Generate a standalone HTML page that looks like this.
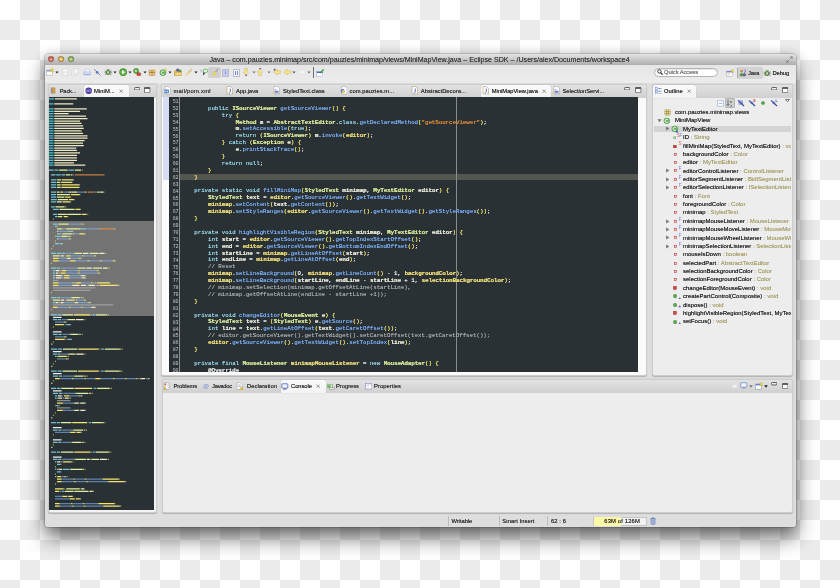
<!DOCTYPE html><html><head><meta charset='utf-8'><title>Eclipse SDK</title><style>
html,body{margin:0;padding:0}
body{width:840px;height:588px;overflow:hidden;position:relative;
 background-color:#fff;
 background-image:conic-gradient(#ececec 25%,#fff 0 50%,#ececec 0 75%,#fff 0);background-size:40px 40px;
 font-family:"Liberation Sans",sans-serif;font-size:5.9px;color:#222}
.a{position:absolute}
.t{position:absolute;white-space:nowrap;line-height:8px;height:8px;text-shadow:0 0 .4px rgba(20,20,20,.75)}
#win{left:45px;top:54px;width:751px;height:473px;background:#dedede;border-radius:3px 3px 2px 2px;
 box-shadow:0 0 0 .5px rgba(0,0,0,.3),0 11px 20px rgba(0,0,0,.55),0 1px 12px rgba(0,0,0,.18)}
#title{left:45px;top:54px;width:751px;height:10.6px;border-radius:3px 3px 0 0;
 background:linear-gradient(#e4e4e4,#adadad);box-shadow:0 .5px 0 #9a9a9a}
#tool{left:45px;top:64.6px;width:751px;height:18px;background:linear-gradient(#e6e6e6,#ececec)}
.tl{position:absolute;width:6.2px;height:6.2px;border-radius:50%;top:56px;box-sizing:border-box}
.panel{position:absolute;background:#ededed;border:1px solid #cdcdcd;border-radius:2.5px;box-sizing:border-box;
 box-shadow:0 .5px 1px rgba(0,0,0,.2)}
.tabbar{position:absolute;left:0;top:0;right:0;height:12.4px;background:linear-gradient(#e2e2e2,#d0d0d0);border-radius:2px 2px 0 0}
.atab{position:absolute;top:0;height:12.6px;background:linear-gradient(#fafafa,#f3f3f3);border-radius:2px 2px 0 0;box-shadow:0 0 .8px rgba(0,0,0,.4)}
.code{position:absolute;white-space:pre;text-shadow:0 0 .5px;font-family:"Liberation Mono",monospace;font-size:5.74px;line-height:6.895px;height:6.895px;color:#e6e6e6}
.ln{position:absolute;font-family:"Liberation Mono",monospace;font-size:5px;line-height:6.895px;height:6.895px;color:#c4c4c4;text-align:right;width:9px;left:169.4px;letter-spacing:-.2px}
.k{color:#94d2e4}.ty{color:#d6e59a;text-shadow:.4px 0 0,0 0 .5px}.m{color:#78aaf0}.v{color:#e8e8da;text-shadow:.4px 0 0,0 0 .5px}.f{color:#ecdc78;text-shadow:.4px 0 0,0 0 .5px}
.b{color:#f2e36e}.s{color:#e08a3c}.c{color:#a0a4a6}.o{color:#e8e8e8}.an{color:#dcdcdc;text-shadow:.4px 0 0,0 0 .5px}.n{color:#e8e8e8}
.dd{position:absolute;width:0;height:0;border-left:1.7px solid transparent;border-right:1.7px solid transparent;border-top:2.3px solid #222}
.ty2{color:#a59c62;text-shadow:0 0 .3px rgba(150,140,80,.6)}
</style></head><body><div id='root' style='position:absolute;left:0;top:0;width:840px;height:588px;will-change:transform;filter:blur(.3px)'>
<div id='win' class='a'></div><div id='title' class='a'></div><div id='tool' class='a'></div>
<div class='tl' style='left:48.3px;background:radial-gradient(circle at 50% 65%,#f09a90 20%,#c9453c 95%);border:.5px solid rgba(90,60,40,.45)'></div>
<div class='tl' style='left:58.2px;background:radial-gradient(circle at 50% 65%,#f8dc8a 20%,#d0a030 95%);border:.5px solid rgba(90,60,40,.45)'></div>
<div class='tl' style='left:68.1px;background:radial-gradient(circle at 50% 65%,#b8e092 20%,#6aa844 95%);border:.5px solid rgba(90,60,40,.45)'></div>
<div class='t' style='left:209.5px;top:56px;font-size:7.1px;color:#333;text-shadow:0 0 .4px rgba(40,40,40,.6)'>Java – com.pauzies.minimap/src/com/pauzies/minimap/views/MiniMapView.java – Eclipse SDK – /Users/alex/Documents/workspace4</div>
<svg class='a' style='left:786px;top:55.5px' width='7' height='7' viewBox='0 0 7 7'><path d='M4 0.5H6.5V3zM3 6.5H0.5V4z' fill='#777'/><path d='M6.2 .8L4 3M.8 6.2L3 4' stroke='#777' stroke-width='.8'/></svg>
<svg class='a' style='left:45.85px;top:68.45px' width='8.3' height='8.3' viewBox='0 0 16 16'><rect x='1' y='4' width='12' height='10' fill='#fdfde8' stroke='#a0a8c4' stroke-width='1'/><rect x='1' y='4' width='12' height='2.600' fill='#7f9ad6'/><path d='M12 0l1.2 2.6 2.8.4-2 2 .5 2.8L12 6.500 9.500 7.800l.5-2.800-2-2 2.800-.4z' fill='#f3d646' stroke='#b89a20' stroke-width='.5'/></svg>
<svg class='a' style='left:55.0px;top:71.4px' width='4' height='3' viewBox='0 0 4 3'><path d='M.4 .4h3.200L2 2.500z' fill='#222'/></svg>
<svg class='a' style='left:60.85px;top:68.45px' width='8.3' height='8.3' viewBox='0 0 16 16'><rect x='2' y='2' width='12' height='12' rx='1' fill='#efefef' stroke='#d2d2d2'/><rect x='4.500' y='2' width='7' height='4.500' fill='#f8f8f8' stroke='#d8d8d8' stroke-width='.6'/><rect x='4.500' y='9' width='7' height='5' fill='#f6f6f6' stroke='#d8d8d8' stroke-width='.6'/></svg>
<svg class='a' style='left:71.45px;top:68.45px' width='8.3' height='8.3' viewBox='0 0 16 16'><rect x='1' y='4' width='9' height='10' fill='#f1f1f1' stroke='#d4d4d4'/><rect x='5' y='1.500' width='9' height='10' fill='#f3f3f3' stroke='#d4d4d4'/></svg>
<svg class='a' style='left:82.85px;top:68.45px' width='8.3' height='8.3' viewBox='0 0 16 16'><rect x='4' y='2' width='8' height='6' fill='#fff' stroke='#a8b2d0' stroke-width='.8'/><path d='M5.500 4h5M5.500 5.800h5' stroke='#c8cee0' stroke-width='.6'/><rect x='1' y='7.500' width='14' height='6' rx='1.800' fill='#d4defa' stroke='#8a9cd0' stroke-width='.8'/><rect x='2.500' y='11.500' width='11' height='2' fill='#9fb2e6'/></svg>
<svg class='a' style='left:93.35px;top:68.45px' width='8.3' height='8.3' viewBox='0 0 16 16'><circle cx='8' cy='8.500' r='2.800' fill='#6a86d4'/><path d='M2 2L14.500 14.500' stroke='#3a4fa8' stroke-width='1.200'/></svg>
<svg class='a' style='left:104.15px;top:68.45px' width='8.3' height='8.3' viewBox='0 0 16 16'><ellipse cx='8' cy='8.500' rx='3.800' ry='4.400' fill='#6aa854' stroke='#2c4a24' stroke-width='1'/><path d='M1 5.500l3.500 1.500M1 9h3.200M1.500 13l3.300-2M15 5.500l-3.500 1.500M15 9h-3.200M14.500 13l-3.300-2M6 1.500l1 2.500M10 1.500l-1 2.500' stroke='#3a4a36' stroke-width='1' fill='none'/><ellipse cx='8' cy='8.500' rx='1.600' ry='2.200' fill='#d8f0c8'/></svg>
<svg class='a' style='left:112.8px;top:71.4px' width='4' height='3' viewBox='0 0 4 3'><path d='M.4 .4h3.200L2 2.500z' fill='#222'/></svg>
<svg class='a' style='left:118.75px;top:68.45px' width='8.3' height='8.3' viewBox='0 0 16 16'><circle cx='8' cy='8' r='7' fill='#4c9a35' stroke='#2f6e22' stroke-width='.8'/><circle cx='8' cy='8' r='5.600' fill='#6cb64e'/><path d='M6 4l5.500 4L6 12z' fill='#fff'/></svg>
<svg class='a' style='left:127.8px;top:71.4px' width='4' height='3' viewBox='0 0 4 3'><path d='M.4 .4h3.200L2 2.500z' fill='#222'/></svg>
<svg class='a' style='left:133.35px;top:68.45px' width='8.3' height='8.3' viewBox='0 0 16 16'><circle cx='6' cy='5.600' r='5' fill='#57a63c' stroke='#2f6e22' stroke-width='.7'/><path d='M4.600 3l3.600 2.600-3.600 2.600z' fill='#fff'/><rect x='7.500' y='10' width='7.500' height='4.600' rx='.8' fill='#d6392e' stroke='#8e1e18' stroke-width='.6'/><path d='M9.800 10V8.800h3V10' stroke='#8e1e18' stroke-width='.8' fill='none'/></svg>
<svg class='a' style='left:142.6px;top:71.4px' width='4' height='3' viewBox='0 0 4 3'><path d='M.4 .4h3.200L2 2.500z' fill='#222'/></svg>
<svg class='a' style='left:148.35px;top:68.45px' width='8.3' height='8.3' viewBox='0 0 16 16'><rect x='2' y='4' width='11.500' height='10' fill='#f0cc8a' stroke='#a87838' stroke-width='.9'/><path d='M7.800 4v10M2 8.500h11.500' stroke='#8a5c24' stroke-width='1.200'/><path d='M13 .5l.8 1.800 2 .2-1.500 1.300.4 2L13 4.800l-1.700 1 .4-2-1.500-1.300 2-.2z' fill='#f6dc50'/></svg>
<svg class='a' style='left:159.15px;top:68.45px' width='8.3' height='8.3' viewBox='0 0 16 16'><circle cx='7.500' cy='9' r='5.800' fill='#62b058' stroke='#3a8434' stroke-width='.9'/><path d='M10.200 6.800A3.400 3.400 0 1 0 10.400 11' stroke='#fff' stroke-width='1.700' fill='none'/><path d='M13 .5l.8 1.800 2 .2-1.500 1.300.4 2L13 4.800l-1.700 1 .4-2-1.500-1.300 2-.2z' fill='#f6dc50' stroke='#c4a62c' stroke-width='.3'/></svg>
<svg class='a' style='left:168.2px;top:71.4px' width='4' height='3' viewBox='0 0 4 3'><path d='M.4 .4h3.200L2 2.500z' fill='#222'/></svg>
<svg class='a' style='left:174.15px;top:68.45px' width='8.3' height='8.3' viewBox='0 0 16 16'><path d='M1 5h5l1.500 1.500H15V14H1z' fill='#f0c95a' stroke='#a8842a' stroke-width='.8'/><circle cx='7' cy='4' r='3' fill='#6a54a8'/><circle cx='11.500' cy='5.500' r='2.800' fill='#4f9a44'/><path d='M1 14l2-5.500h13L14 14z' fill='#f8dc84' stroke='#a8842a' stroke-width='.7'/></svg>
<svg class='a' style='left:185.45px;top:68.45px' width='8.3' height='8.3' viewBox='0 0 16 16'><path d='M2 14L12 3' stroke='#d8b66a' stroke-width='3.400' stroke-linecap='round'/><path d='M2.500 13.500L12 3' stroke='#f8ecb0' stroke-width='1.800' stroke-linecap='round'/><path d='M9 5.500l2.500 2.500' stroke='#aaa' stroke-width='1.600'/><circle cx='2.500' cy='13.500' r='1.300' fill='#fffbe0'/></svg>
<svg class='a' style='left:193.8px;top:71.4px' width='4' height='3' viewBox='0 0 4 3'><path d='M.4 .4h3.200L2 2.500z' fill='#222'/></svg>
<svg class='a' style='left:200.05px;top:68.45px' width='8.3' height='8.3' viewBox='0 0 16 16'><ellipse cx='10.500' cy='5.500' rx='4.500' ry='3.500' fill='#e3f2d8' stroke='#4b9a3c' stroke-width='1.300'/><path d='M6 8l3.500 1.500L6.500 15z' fill='#222'/><path d='M2 3.500v5M.5 4.500h3' stroke='#8aa0e0' stroke-width='1'/></svg>
<div class='a' style='left:209.4px;top:67.5px;width:10.4px;height:9.7px;background:#d0d0d0;box-shadow:0 0 0 .5px #bcbcbc;border-radius:.5px'></div>
<svg class='a' style='left:210.85px;top:68.45px' width='8.3' height='8.3' viewBox='0 0 16 16'><path d='M13.500 1.500L8 9' stroke='#8c8c8c' stroke-width='1.800'/><path d='M3 13c1-4 3-5.500 6-5l1.500 2C9.500 13 7 14.500 3 13z' fill='#f4e04a' stroke='#c8b22c' stroke-width='.6'/></svg>
<div class='a' style='left:222.2px;top:69px;width:6.7px;height:7.5px;background:#c3cbee;border:.6px solid #b8bcc8;box-sizing:border-box'></div>
<div class='a' style='left:224.6px;top:70.8px;width:1.6px;height:3.6px;background:#7f8fd6;opacity:.85'></div>
<div class='a' style='left:233px;top:69px;width:6.8px;height:7.5px;background:#f6f8ff;border:.6px solid #b8bcc8;box-sizing:border-box'></div>
<div class='a' style='left:235.2px;top:70.6px;width:.8px;height:4.4px;background:#6f88d4'></div><div class='a' style='left:237px;top:70.6px;width:.8px;height:4.4px;background:#6f88d4'></div><div class='a' style='left:234.7px;top:70.5px;width:1.6px;height:1.9px;background:#7f96dc;border-radius:1px'></div>
<svg class='a' style='left:241.85px;top:68.45px' width='8.3' height='8.3' viewBox='0 0 16 16'><path d='M5.500 1h5v7h3L8 14.500 2.500 8h3z' fill='#f8e68c' stroke='#c8aa48' stroke-width='.8'/><rect x='6' y='13' width='4' height='1.600' fill='#3a3a6a'/><rect x='10' y='6' width='5.500' height='9' fill='#dfe4f4' opacity='.6'/></svg>
<svg class='a' style='left:251.8px;top:71.4px' width='4' height='3' viewBox='0 0 4 3'><path d='M.4 .4h3.200L2 2.500z' fill='#777'/></svg>
<svg class='a' style='left:256.35px;top:68.45px' width='8.3' height='8.3' viewBox='0 0 16 16'><g transform='rotate(180 8 8)'><path d='M5.500 1h5v7h3L8 14.500 2.500 8h3z' fill='#f8e68c' stroke='#c8aa48' stroke-width='.8'/></g><rect x='6' y='.6' width='4' height='1.500' fill='#3a3a6a'/><rect x='10.500' y='1' width='5' height='9' fill='#dfe4f4' opacity='.6'/></svg>
<svg class='a' style='left:266.8px;top:71.4px' width='4' height='3' viewBox='0 0 4 3'><path d='M.4 .4h3.200L2 2.500z' fill='#777'/></svg>
<svg class='a' style='left:272.95px;top:68.45px' width='8.3' height='8.3' viewBox='0 0 16 16'><path d='M15 5.500v5H8v3L1.500 8 8 2.500v3z' fill='#f8e68c' stroke='#c8aa48' stroke-width='.8'/><path d='M3 .5l.8 1.700 1.800.2-1.300 1.200.3 1.800L3 4.500l-1.600.9.300-1.800L.4 2.400l1.800-.2z' fill='#445'/></svg>
<svg class='a' style='left:283.35px;top:68.45px' width='8.3' height='8.3' viewBox='0 0 16 16'><path d='M15 5.500v5H8v3L1.500 8 8 2.500v3z' fill='#f8e68c' stroke='#c8aa48' stroke-width='.8'/></svg>
<svg class='a' style='left:292.4px;top:71.4px' width='4' height='3' viewBox='0 0 4 3'><path d='M.4 .4h3.200L2 2.500z' fill='#555'/></svg>
<svg class='a' style='left:298.35px;top:68.45px' width='8.3' height='8.3' viewBox='0 0 16 16'><path d='M1 5.500v5h7v3L14.500 8 8 2.500v3z' fill='#f7f7f7' stroke='#d8d8d8' stroke-width='.8'/></svg>
<svg class='a' style='left:307.2px;top:71.4px' width='4' height='3' viewBox='0 0 4 3'><path d='M.4 .4h3.200L2 2.500z' fill='#666'/></svg>
<div class='a' style='left:313px;top:67.2px;width:.7px;height:10.6px;background:#6e6e6e'></div>
<svg class='a' style='left:315.85px;top:68.65px' width='8.3' height='8.3' viewBox='0 0 16 16'><rect x='1.500' y='5' width='11.500' height='9.500' fill='#fafcff' stroke='#90a0c8' stroke-width='.8'/><rect x='1.500' y='5' width='11.500' height='2.800' fill='#4a6cbc'/><path d='M9 6.500L14 1.500' stroke='#3d9a34' stroke-width='2.200'/><circle cx='14' cy='2' r='1.600' fill='#4fae40'/></svg>
<div class='a' style='left:654.2px;top:67.7px;width:63.4px;height:8.9px;background:#fff;border:.6px solid #b4b4b4;border-radius:4.5px;box-sizing:border-box;box-shadow:inset 0 .6px .8px rgba(0,0,0,.18)'></div>
<svg class='a' style='left:656.80px;top:69.30px' width='6' height='6' viewBox='0 0 6 6'><circle cx='2.400' cy='2.400' r='1.700' fill='none' stroke='#3a3a3a' stroke-width='1'/><path d='M3.600 3.600L5.600 5.600' stroke='#3a3a3a' stroke-width='1.300'/></svg>
<div class='t' style='left:664px;top:68.15px;font-size:5.8px;letter-spacing:-0.066px;color:#8a8a8a;'>Quick Access</div>
<svg class='a' style='left:725.85px;top:68.85px' width='8.3' height='8.3' viewBox='0 0 16 16'><rect x='1.500' y='4' width='11.500' height='10.500' fill='#fdfdf4' stroke='#8e98b4' stroke-width='.8'/><rect x='1.500' y='4' width='11.500' height='2.600' fill='#6a86c8'/><path d='M3 9h4M3 11.500h4' stroke='#999' stroke-width='.8'/><path d='M12.500 0l1 2.300 2.400.3-1.800 1.700.5 2.400-2.100-1.200-2.100 1.200.5-2.400L9.100 2.600l2.400-.3z' fill='#f3d646' stroke='#b89a20' stroke-width='.4'/></svg>
<div class='a' style='left:736.5px;top:67.6px;width:.6px;height:10.4px;background:#9a9a9a'></div>
<div class='a' style='left:738.4px;top:67.7px;width:23.2px;height:10.1px;background:#d3d3d3;box-shadow:0 0 0 .5px #bcbcbc;border-radius:.5px'></div>
<svg class='a' style='left:738.65px;top:68.65px' width='8.3' height='8.3' viewBox='0 0 16 16'><circle cx='5' cy='4' r='2.600' fill='#c98a4a'/><path d='M1 14c0-5 2-6.500 4.500-6.500S10 9 10 14z' fill='#5a9a48'/><circle cx='10.500' cy='11' r='3' fill='#6a54a8'/><path d='M12 1v4.500c0 1.200-.6 1.700-1.800 1.700' stroke='#3b56b8' stroke-width='1.300' fill='none'/></svg>
<div class='t' style='left:748px;top:68.85px;font-size:5.8px;letter-spacing:-0.25px;color:#333;'>Java</div>
<svg class='a' style='left:763.15px;top:68.65px' width='8.3' height='8.3' viewBox='0 0 16 16'><ellipse cx='8' cy='8.500' rx='3.800' ry='4.400' fill='#6aa854' stroke='#2c4a24' stroke-width='1'/><path d='M1 5.500l3.500 1.500M1 9h3.200M1.500 13l3.300-2M15 5.500l-3.500 1.500M15 9h-3.200M14.500 13l-3.300-2M6 1.500l1 2.500M10 1.500l-1 2.500' stroke='#3a4a36' stroke-width='1' fill='none'/><ellipse cx='8' cy='8.500' rx='1.600' ry='2.200' fill='#d8f0c8'/></svg>
<div class='t' style='left:772.5px;top:68.85px;font-size:5.8px;letter-spacing:-0.119px;color:#222;'>Debug</div>
<div class='panel' style='left:47.5px;top:84.3px;width:109.3px;height:428.8px;background:#f4f4f4'><div class='tabbar'></div><div class='atab' style='left:35.2px;width:45.5px'></div></div>
<svg class='a' style='left:50.20px;top:86.90px' width='6' height='7' viewBox='0 0 6 7'><path d='M1.300 .4v6.200' stroke='#5a4a3a' stroke-width='.6'/><rect x='2.400' y='.9' width='2.600' height='2.200' fill='#e8a84a' stroke='#9a6a24' stroke-width='.45'/><rect x='2.400' y='3.900' width='2.600' height='2.200' fill='#e8a84a' stroke='#9a6a24' stroke-width='.45'/></svg>
<div class='t' style='left:59.7px;top:86.55px;font-size:5.8px;letter-spacing:-0.191px;color:#2e2a34;'>Pack...</div>
<svg class='a' style='left:84.50px;top:87.00px' width='7.4' height='7.4' viewBox='0 0 7.4 7.4'><circle cx='3.700' cy='3.700' r='3.300' fill='#4a3a9a'/><ellipse cx='3.700' cy='3.200' rx='2.600' ry='1.500' fill='#7a6cc8' opacity='.8'/><path d='M.6 4.200h6.200' stroke='#d8d4f0' stroke-width='.5'/></svg>
<div class='t' style='left:94px;top:86.55px;font-size:5.8px;letter-spacing:0.063px;color:#222;'>MiniM...</div>
<svg class='a' style='left:119.40px;top:88.60px' width='4.4' height='4.4' viewBox='0 0 4.4 4.4'><path d='M.6 .6L3.800 3.800M3.800 .6L.6 3.800' stroke='#8a8a8a' stroke-width='.9'/></svg>
<svg class='a' style='left:133.8px;top:86.9px' width='6.4' height='3.6' viewBox='0 0 6.4 3.6'><rect x='.5' y='.5' width='5.4' height='2.5' rx='1' fill='#eee' stroke='#3a3a3a' stroke-width='.8'/></svg>
<svg class='a' style='left:144.4px;top:87.1px' width='6.4' height='6.4' viewBox='0 0 6.4 6.4'><rect x='.5' y='.5' width='5.4' height='5.2' rx='.4' fill='#fcfcfc' stroke='#3c3c3c' stroke-width='.65'/><rect x='.5' y='.5' width='5.4' height='1.3' fill='#3c3c3c'/></svg>
<div class='a' style='left:48.7px;top:97px;width:105.7px;height:413.3px;background:#293134;overflow:hidden' id='mm'>
<div class='a' style='left:0;top:123.7px;width:105px;height:95.7px;background:#737373'></div>
<svg class='a' style='left:0;top:0' width='105' height='413.3' viewBox='0 0 105 413.3' fill='none' stroke-width='1.25'><path stroke='#4cc4d4' d='M0.0 2.0h5.3M0.0 6.9h4.5M0.0 11.8h4.5M0.0 14.3h4.5M0.0 16.7h4.5M0.0 19.2h4.5M0.0 21.6h4.5M0.0 24.1h4.5M0.0 26.5h4.5M0.0 29.0h4.5M0.0 31.4h4.5M0.0 33.9h4.5M0.0 36.3h4.5M0.0 38.8h4.5M0.0 41.2h4.5M0.0 43.7h4.5M0.0 46.1h4.5M0.0 48.6h4.5M0.0 51.1h4.5M0.0 53.5h4.5M0.0 56.0h4.5M0.0 58.4h4.5M0.0 60.9h4.5M0.0 63.3h4.5M0.0 65.8h4.5M0.0 68.2h4.5'/><path stroke='#efe9c4' d='M6.0 2.0h21.9M5.3 6.9h18.9M5.3 11.8h32.5M5.3 14.3h25.7M5.3 16.7h14.3M5.3 19.2h31.7M5.3 21.6h33.2M5.3 24.1h25.7M5.3 26.5h27.2M5.3 29.0h28.7M5.3 31.4h29.4M5.3 33.9h27.2M5.3 36.3h28.7M5.3 38.8h33.2M5.3 41.2h33.2M5.3 43.7h30.2M5.3 46.1h28.7M5.3 48.6h29.4M5.3 51.1h21.9M5.3 53.5h22.6M5.3 56.0h25.7M5.3 58.4h22.6M5.3 60.9h22.6M5.3 63.3h22.6M5.3 65.8h19.6M5.3 68.2h31.0'/><path stroke='#84daf0' opacity='0.85' d='M0.0 73.1h4.7M5.5 73.1h3.9M19.5 73.1h5.5M2.0 78.0h4.5M7.2 78.0h4.5M12.4 78.0h3.7M2.0 82.9h5.4M2.0 85.4h5.0M2.0 87.8h5.2M2.0 90.3h5.2M2.0 95.2h5.1M16.4 95.2h2.2M2.0 97.6h5.1M2.0 100.1h5.2M2.0 102.6h5.9M2.0 105.0h5.0M2.0 109.9h3.8M3.9 112.4h5.8M3.9 117.3h4.4M6.0 119.7h2.5M3.9 127.1h4.7M6.0 129.5h1.8M32.0 132.0h4.0M19.8 134.4h3.0M8.0 136.9h4.3M7.4 139.3h3.5M6.0 146.7h4.0M10.7 146.7h2.7M2.0 156.5h5.2M8.0 156.5h4.5M13.2 156.5h3.0M2.0 171.2h5.3M8.0 171.2h3.0M3.9 173.7h2.2M3.9 176.1h2.3M3.9 178.6h2.1M3.9 181.0h2.3M2.0 200.7h5.6M8.4 200.7h3.2M3.9 205.6h2.1M2.0 217.8h5.7M8.5 217.8h4.1M43.7 217.8h2.5M3.9 222.7h4.4M9.0 222.7h3.0M17.3 227.6h4.0M3.9 237.4h4.8M9.5 237.4h3.2M18.4 242.3h3.5M2.0 252.2h6.0M8.8 252.2h4.3M52.3 252.2h2.6M3.9 257.1h4.2M8.8 257.1h2.8M6.0 259.5h1.6M2.0 274.2h5.8M8.6 274.2h4.1M52.2 274.2h2.5M3.9 279.1h5.1M9.8 279.1h3.4M2.0 291.4h5.1M7.9 291.4h3.7M45.2 291.4h2.2M3.9 296.3h5.2M9.9 296.3h3.5M6.0 298.8h2.2M6.0 301.2h1.6M7.2 308.6h2.4M2.0 325.7h4.9M7.7 325.7h3.5M40.2 325.7h2.1M3.9 333.1h4.6M9.3 333.1h3.1M3.9 345.4h4.7M9.3 345.4h3.1M2.0 355.2h5.0M7.7 355.2h3.5M43.7 355.2h2.1M3.9 362.5h4.6M9.2 362.5h3.1M6.0 365.0h1.4M8.0 367.4h3.6M6.0 372.3h1.4M13.6 372.3h6.9M8.0 374.8h3.6M6.0 379.7h1.2M14.4 379.7h2.4M12.6 394.4h2.2'/><path stroke='#e2f0a2' d='M10.1 73.1h8.6M25.8 73.1h6.2M16.8 78.0h4.5M22.0 78.0h1.5M8.1 82.9h3.8M7.7 85.4h3.6M8.0 87.8h3.7M7.9 90.3h3.7M7.8 95.2h2.9M19.3 95.2h2.9M22.9 95.2h5.1M48.2 95.2h2.2M51.1 95.2h2.9M7.9 97.6h13.2M8.0 100.1h7.5M8.8 102.6h10.2M6.5 109.9h9.1M10.5 112.4h15.0M9.0 117.3h8.9M18.6 117.3h13.3M9.4 127.1h10.3M8.0 132.0h4.8M16.8 132.0h14.4M13.7 136.9h9.2M12.3 139.3h6.3M25.8 156.5h7.4M40.7 156.5h8.9M3.9 159.0h7.3M29.1 171.2h7.5M44.1 171.2h9.0M22.9 200.7h8.0M3.9 203.1h7.4M17.9 203.1h7.4M13.4 217.8h10.6M46.9 217.8h9.8M18.7 222.7h7.4M21.5 237.4h8.0M13.9 252.2h14.5M55.7 252.2h14.5M19.4 257.1h7.1M13.5 274.2h14.8M55.5 274.2h14.8M25.9 279.1h8.5M12.3 291.4h12.5M48.2 291.4h11.7M27.2 296.3h12.1M11.9 325.7h10.6M43.0 325.7h10.6M24.7 333.1h9.3M23.2 345.4h9.3M11.9 355.2h12.7M46.6 355.2h12.7M26.2 362.5h10.8M42.3 362.5h7.7M21.2 372.3h12.4M17.6 391.9h13.0M15.6 394.4h8.8M25.9 394.4h13.2'/><path stroke='#f6e870' opacity='0.85' d='M32.8 73.1h0.8M22.2 95.2h0.7M35.9 95.2h0.7M36.6 95.2h0.7M54.0 95.2h0.7M16.4 109.9h0.8M17.9 117.3h0.7M37.1 117.3h0.7M38.5 117.3h0.7M3.9 122.2h0.8M32.3 127.1h0.8M33.0 127.1h0.8M34.6 127.1h0.8M8.4 129.5h0.6M50.4 132.0h0.8M64.8 132.0h0.8M19.1 134.4h0.7M22.8 134.4h0.7M13.0 136.9h0.7M22.9 136.9h0.7M30.0 136.9h0.7M35.0 136.9h0.7M6.0 139.3h0.7M11.6 139.3h0.7M20.0 139.3h0.7M21.4 139.3h0.7M20.0 141.8h0.7M20.7 141.8h0.7M6.0 144.2h0.8M3.9 149.2h0.8M2.0 151.6h0.8M25.1 156.5h0.7M54.9 156.5h0.7M56.4 156.5h0.7M33.2 159.0h0.7M33.9 159.0h0.7M44.9 159.0h0.7M45.7 159.0h0.7M17.5 161.4h0.8M29.5 161.4h0.8M30.3 161.4h0.8M31.0 161.4h0.8M20.7 163.9h0.8M38.3 163.9h0.8M39.1 163.9h0.8M50.6 163.9h0.8M51.4 163.9h0.8M63.6 163.9h0.8M64.4 163.9h0.8M65.2 163.9h0.8M2.0 166.3h0.8M28.3 171.2h0.8M58.4 171.2h0.8M59.9 171.2h0.8M29.0 173.7h0.7M29.7 173.7h0.7M47.5 173.7h0.7M48.2 173.7h0.7M28.7 176.1h0.8M29.4 176.1h0.8M48.8 176.1h0.8M49.6 176.1h0.8M31.5 178.6h0.7M35.7 178.6h0.7M32.5 181.0h0.8M35.6 181.0h0.8M23.3 185.9h0.8M42.0 185.9h0.8M42.7 185.9h0.8M59.9 185.9h0.8M22.7 188.4h0.8M68.8 188.4h0.8M2.0 195.7h0.8M22.1 200.7h0.8M32.6 200.7h0.8M34.2 200.7h0.8M17.2 203.1h0.7M25.3 203.1h0.7M34.9 203.1h0.7M35.6 203.1h0.7M25.4 205.6h0.7M39.3 205.6h0.7M40.0 205.6h0.7M40.7 205.6h0.7M20.0 210.5h0.7M20.7 210.5h0.7M31.7 210.5h0.7M32.5 210.5h0.7M42.0 210.5h0.7M45.7 210.5h0.7M2.0 212.9h0.8M56.7 217.8h0.8M57.5 217.8h0.8M59.2 217.8h0.8M17.9 222.7h0.7M34.2 222.7h0.7M35.7 222.7h0.7M14.9 225.2h0.7M16.4 225.2h0.7M3.9 230.1h0.8M20.7 237.4h0.8M31.1 237.4h0.8M32.8 237.4h0.8M14.9 239.9h0.7M16.4 239.9h0.7M3.9 244.8h0.8M2.0 247.2h0.8M70.1 252.2h0.9M71.0 252.2h0.9M72.7 252.2h0.9M18.7 257.1h0.7M34.3 257.1h0.7M35.7 257.1h0.7M8.3 259.5h0.8M17.7 259.5h0.8M19.2 259.5h0.8M17.0 262.0h0.7M18.5 262.0h0.7M6.0 264.4h0.8M3.9 266.9h0.8M2.0 269.3h0.8M70.3 274.2h0.8M71.1 274.2h0.8M72.7 274.2h0.8M25.0 279.1h0.8M36.0 279.1h0.8M37.7 279.1h0.8M22.9 281.6h0.8M23.7 281.6h0.8M35.3 281.6h0.8M36.0 281.6h0.8M46.0 281.6h0.8M63.7 281.6h0.8M64.5 281.6h0.8M76.1 281.6h0.8M76.8 281.6h0.8M86.8 281.6h0.8M87.6 281.6h0.8M99.2 281.6h0.8M3.9 284.0h0.8M2.0 286.5h0.8M59.9 291.4h0.7M60.6 291.4h0.7M62.1 291.4h0.7M26.3 296.3h0.9M41.0 296.3h0.9M42.7 296.3h0.9M29.8 298.8h0.7M30.6 298.8h0.7M8.4 301.2h0.8M19.7 301.2h0.8M21.3 301.2h0.8M24.6 306.1h0.8M35.5 306.1h0.8M6.0 308.6h0.6M10.2 308.6h0.6M24.6 313.5h0.8M35.5 313.5h0.8M6.0 315.9h0.8M3.9 318.4h0.8M2.0 320.8h0.8M53.6 325.7h0.7M54.3 325.7h0.7M55.7 325.7h0.7M23.9 333.1h0.8M35.5 333.1h0.8M37.1 333.1h0.8M20.8 335.5h0.7M31.5 335.5h0.7M3.9 338.0h0.8M22.5 345.4h0.8M34.1 345.4h0.8M35.6 345.4h0.8M3.9 347.8h0.8M2.0 350.3h0.8M59.3 355.2h0.7M60.0 355.2h0.7M61.4 355.2h0.7M25.4 362.5h0.8M57.7 362.5h0.8M59.2 362.5h0.8M8.0 365.0h0.7M22.2 365.0h0.7M23.6 365.0h0.7M6.0 369.9h0.8M8.1 372.3h0.7M9.5 372.3h0.7M33.6 372.3h0.7M34.3 372.3h0.7M35.7 372.3h0.7M6.0 377.2h0.8M7.8 379.7h0.6M16.8 379.7h0.6M18.0 379.7h0.6M24.0 382.1h0.7M24.8 382.1h0.7M35.7 382.1h0.7M36.4 382.1h0.7M53.2 382.1h0.7M69.2 382.1h0.7M24.9 384.6h0.8M25.7 384.6h0.8M37.2 384.6h0.8M38.0 384.6h0.8M58.7 384.6h0.8M75.6 384.6h0.8M6.0 387.0h0.8M16.9 391.9h0.7M30.6 391.9h0.7M24.4 394.4h0.7M25.1 394.4h0.7M39.1 394.4h0.7M43.5 394.4h0.7M12.9 399.3h0.6M23.0 399.3h0.6M20.4 401.8h0.7M30.8 401.8h0.7M22.0 406.7h0.7M22.7 406.7h0.7M33.7 406.7h0.7M34.4 406.7h0.7M48.9 406.7h0.7M65.0 406.7h0.7M22.7 409.1h0.8M23.5 409.1h0.8M34.9 409.1h0.8M35.6 409.1h0.8M53.9 409.1h0.8M70.6 409.1h0.8'/><path stroke='#f0f0f0' opacity='0.6' d='M24.3 78.0h0.7M54.7 78.0h0.7M24.2 82.9h0.8M22.8 85.4h0.7M30.4 87.8h0.7M30.0 90.3h0.7M15.0 95.2h0.7M28.0 95.2h0.7M37.4 95.2h0.7M44.6 95.2h0.7M46.8 95.2h0.7M50.4 95.2h0.7M54.7 95.2h0.7M30.7 97.6h0.7M21.4 100.1h0.7M24.9 102.6h0.8M21.4 105.0h0.7M31.3 112.4h0.8M8.5 119.7h0.6M13.6 119.7h0.6M18.6 119.7h0.6M15.2 132.0h0.8M31.2 132.0h0.8M36.0 132.0h0.8M65.6 132.0h0.8M8.7 134.4h0.7M23.5 134.4h0.7M25.0 136.9h0.7M35.7 136.9h0.7M8.7 141.8h0.7M21.4 141.8h0.7M13.3 146.7h0.7M39.2 156.5h0.7M15.6 159.0h0.7M21.5 159.0h0.7M34.7 159.0h0.7M46.4 159.0h0.7M9.1 161.4h0.8M21.2 161.4h0.8M31.8 161.4h0.8M9.2 163.9h0.8M26.1 163.9h0.8M39.9 163.9h0.8M52.1 163.9h0.8M65.9 163.9h0.8M42.6 171.2h0.8M11.3 173.7h0.7M17.2 173.7h0.7M30.5 173.7h0.7M49.0 173.7h0.7M10.1 176.1h0.8M16.3 176.1h0.8M30.2 176.1h0.8M50.4 176.1h0.8M13.8 178.6h0.7M20.1 178.6h0.7M36.4 178.6h0.7M13.1 181.0h0.8M20.1 181.0h0.8M36.4 181.0h0.8M9.3 185.9h0.8M24.9 185.9h0.8M31.9 185.9h0.8M44.3 185.9h0.8M46.6 185.9h0.8M60.6 185.9h0.8M9.1 188.4h0.8M30.3 188.4h0.8M37.8 188.4h0.8M46.9 188.4h0.8M49.1 188.4h0.8M69.5 188.4h0.8M15.7 203.1h0.7M27.5 203.1h0.7M36.4 203.1h0.7M10.1 205.6h0.7M14.3 205.6h0.7M28.9 205.6h0.7M41.4 205.6h0.7M8.3 210.5h0.7M21.5 210.5h0.7M33.2 210.5h0.7M46.4 210.5h0.7M42.0 217.8h0.8M17.1 225.2h0.7M15.7 227.6h0.8M21.3 227.6h0.8M17.1 239.9h0.7M16.6 242.3h0.9M22.0 242.3h0.9M2.8 247.2h0.8M50.6 252.2h0.9M19.2 262.0h0.7M2.8 269.3h0.8M50.5 274.2h0.8M10.6 281.6h0.8M24.5 281.6h0.8M36.8 281.6h0.8M51.4 281.6h0.8M65.3 281.6h0.8M77.6 281.6h0.8M89.2 281.6h0.8M91.5 281.6h0.8M96.9 281.6h0.8M99.9 281.6h0.8M2.8 286.5h0.8M43.8 291.4h0.7M13.4 298.8h0.7M20.2 298.8h0.7M31.3 298.8h0.7M32.8 298.8h0.7M14.1 301.2h0.8M13.8 306.1h0.8M29.6 306.1h0.8M36.3 306.1h0.8M13.8 313.5h0.8M29.6 313.5h0.8M36.3 313.5h0.8M2.8 320.8h0.8M38.7 325.7h0.7M26.1 335.5h0.7M32.2 335.5h0.7M2.8 350.3h0.8M42.3 355.2h0.7M40.8 362.5h0.8M12.1 365.0h0.7M12.8 365.0h0.7M11.6 367.4h0.6M8.8 372.3h0.7M11.6 374.8h0.6M12.6 379.7h0.6M13.2 379.7h0.6M12.4 382.1h0.7M25.5 382.1h0.7M37.2 382.1h0.7M70.0 382.1h0.7M12.6 384.6h0.8M26.4 384.6h0.8M38.7 384.6h0.8M76.4 384.6h0.8M15.4 391.9h0.7M35.0 391.9h0.7M11.1 394.4h0.7M44.3 394.4h0.7M18.0 399.3h0.6M23.6 399.3h0.6M25.6 401.8h0.7M31.5 401.8h0.7M10.4 406.7h0.7M23.5 406.7h0.7M35.1 406.7h0.7M65.7 406.7h0.7M10.6 409.1h0.8M24.2 409.1h0.8M36.4 409.1h0.8M71.4 409.1h0.8'/><path stroke='#f09040' opacity='0.8' d='M25.7 78.0h28.9M38.8 95.2h5.8M51.2 132.0h13.6'/><path stroke='#f6e670' d='M12.7 82.9h11.5M12.1 85.4h10.8M12.5 87.8h17.9M12.3 90.3h17.7M11.4 95.2h2.9M21.9 97.6h8.8M16.2 100.1h5.2M19.8 102.6h5.1M13.5 105.0h7.9M26.3 112.4h5.0M32.6 117.3h4.4M9.2 119.7h3.8M14.8 119.7h3.8M30.7 136.9h4.3M17.1 159.0h4.4M3.9 161.4h5.3M3.9 163.9h5.4M21.5 163.9h4.6M12.7 173.7h4.4M11.6 176.1h4.6M15.2 178.6h5.0M14.7 181.0h5.4M3.9 185.9h5.4M26.4 185.9h5.4M48.2 185.9h11.7M3.9 188.4h5.3M50.6 188.4h18.1M3.9 210.5h4.4M24.9 217.8h16.3M6.0 227.6h8.9M6.0 242.3h9.8M29.3 252.2h20.4M9.1 259.5h8.5M29.1 274.2h20.6M6.0 281.6h4.6M46.8 281.6h4.6M25.5 291.4h17.6M14.9 298.8h5.2M8.0 306.1h5.8M8.0 313.5h5.8M23.2 325.7h14.8M21.4 335.5h4.7M27.5 335.5h4.0M25.3 355.2h16.3M14.1 365.0h8.1M8.4 379.7h3.6M8.0 382.1h4.4M53.9 382.1h15.3M8.0 384.6h4.6M59.5 384.6h16.1M6.0 391.9h8.7M6.0 394.4h4.4M13.6 399.3h4.4M19.2 399.3h3.8M21.0 401.8h4.6M26.9 401.8h3.9M6.0 406.7h4.4M49.7 406.7h15.3M6.0 409.1h4.6M54.6 409.1h16.0'/><path stroke='#84b6f4' opacity='0.62' d='M28.7 95.2h7.2M20.4 127.1h11.8M36.8 132.0h13.6M9.5 134.4h9.6M25.8 136.9h4.3M9.4 141.8h10.6M16.9 156.5h8.2M22.2 159.0h11.0M35.4 159.0h9.5M9.9 161.4h7.6M22.0 161.4h7.6M10.0 163.9h10.7M26.9 163.9h11.5M40.6 163.9h10.0M52.9 163.9h10.7M11.8 171.2h16.6M17.9 173.7h11.1M31.2 173.7h16.3M17.0 176.1h11.6M31.0 176.1h17.8M20.8 178.6h10.6M20.9 181.0h11.6M10.1 185.9h13.2M32.6 185.9h9.3M9.9 188.4h12.8M12.5 200.7h9.7M28.3 203.1h6.7M15.0 205.6h10.4M29.6 205.6h9.7M9.0 210.5h11.0M22.2 210.5h9.5M33.9 210.5h8.1M12.7 222.7h5.2M6.0 225.2h8.9M13.5 237.4h7.2M6.0 239.9h8.9M12.4 257.1h6.4M8.0 262.0h9.0M14.0 279.1h11.0M11.4 281.6h11.5M25.2 281.6h10.0M37.6 281.6h8.5M52.2 281.6h11.5M66.1 281.6h10.0M78.4 281.6h8.5M14.2 296.3h12.1M20.9 298.8h8.9M14.7 306.1h10.0M14.7 313.5h10.0M13.1 333.1h10.8M6.0 335.5h14.8M13.2 345.4h9.3M13.1 362.5h12.3M13.1 382.1h10.9M26.2 382.1h9.5M37.9 382.1h15.3M13.4 384.6h11.5M27.2 384.6h10.0M39.5 384.6h19.2M6.0 399.3h6.9M6.0 401.8h14.4M11.1 406.7h10.9M24.2 406.7h9.5M35.8 406.7h13.1M11.3 409.1h11.4M25.0 409.1h9.9M37.2 409.1h16.7'/><path stroke='#f0f0f0' opacity='0.7' d='M46.0 95.2h0.7M24.1 185.9h0.8M45.9 185.9h0.8M48.4 188.4h0.8M98.4 281.6h0.8'/><path stroke='#f4f0d2' d='M7.8 105.0h5.0M13.6 132.0h0.8M8.0 134.4h0.7M24.3 136.9h0.7M19.3 139.3h0.7M8.0 141.8h0.7M34.0 156.5h5.2M50.4 156.5h4.5M11.9 159.0h2.9M18.2 161.4h3.0M37.4 171.2h5.3M53.9 171.2h4.5M6.8 173.7h3.7M7.0 176.1h2.3M6.7 178.6h6.4M32.2 178.6h3.5M7.0 181.0h5.4M33.3 181.0h2.3M23.5 188.4h6.8M31.8 188.4h5.3M39.3 188.4h6.8M31.8 200.7h0.8M12.0 203.1h3.0M26.8 203.1h0.7M6.6 205.6h2.8M11.5 205.6h2.8M26.1 205.6h2.8M42.7 210.5h2.9M26.8 222.7h7.4M15.6 225.2h0.7M30.3 237.4h0.8M15.6 239.9h0.7M27.2 257.1h7.1M17.7 262.0h0.7M35.2 279.1h0.8M90.7 281.6h0.8M92.2 281.6h3.8M40.1 296.3h0.9M9.0 298.8h3.7M32.1 298.8h0.7M9.2 301.2h4.0M15.7 301.2h4.0M25.5 306.1h4.2M31.3 306.1h4.2M25.5 313.5h4.2M31.3 313.5h4.2M34.8 333.1h0.8M33.3 345.4h0.8M37.7 362.5h3.1M50.8 362.5h6.9M8.7 365.0h2.7M10.1 372.3h2.8M32.1 391.9h2.9M40.6 394.4h2.9'/><path stroke='#b0b4b6' opacity='0.7' d='M3.9 183.5h5.4M3.9 190.8h42.6M3.9 193.3h37.6M3.9 208.0h60.4M8.0 303.7h13.4M8.0 311.0h13.4'/><path stroke='#eeeeee' d='M3.9 220.3h8.7M3.9 235.0h8.7M3.9 254.6h8.7M3.9 276.7h8.7M3.9 293.8h8.7M3.9 330.6h8.7M3.9 342.9h8.7M3.9 360.1h8.7'/></svg>
</div>
<div class='panel' style='left:161.4px;top:84.4px;width:485.3px;height:291.2px;background:#fbfbfb'><div class='tabbar'></div><div class='atab' style='left:318.6px;width:70.3px'></div></div>
<svg class='a' style='left:164.05px;top:86.35px' width='7.5' height='8.5' viewBox='0 0 7.500 8.500'><path d='M1 .5h3.600L6.500 2.400V8H1z' fill='#fff' stroke='#9a9a9a' stroke-width='.5'/><rect x='.3' y='3.600' width='4.600' height='3.600' fill='#4a78c4' rx='.6'/><path d='M1 6.500V4.600l1.300 1.200L3.600 4.600v1.900' stroke='#fff' stroke-width='.6' fill='none'/></svg>
<div class='t' style='left:173.5px;top:86.55px;font-size:5.8px;letter-spacing:0.262px;color:#2a2a2a;'>mail/pom.xml</div>
<svg class='a' style='left:226.15px;top:86.35px' width='7.5' height='8.5' viewBox='0 0 7.500 8.500'><path d='M1 .5h3.600L6.500 2.400V8H1z' fill='#fdfdfd' stroke='#a89a6a' stroke-width='.55'/><path d='M4.300 2.600v3c0 .9-.5 1.300-1.500 1.200' stroke='#4a5cb0' stroke-width='.9' fill='none'/></svg>
<div class='t' style='left:236px;top:86.55px;font-size:5.8px;letter-spacing:-0.045px;color:#2a2a2a;'>App.java</div>
<svg class='a' style='left:273.25px;top:86.35px' width='7.5' height='8.5' viewBox='0 0 7.500 8.500'><path d='M1 .5h3.600L6.500 2.400V8H1z' fill='#fff' stroke='#9a9a9a' stroke-width='.5'/><path d='M1.600 5.500h4M1.600 6.800h4' stroke='#3b5bb0' stroke-width='.8'/><path d='M2 4h1M3.500 4h1' stroke='#3b5bb0' stroke-width='.7'/><path d='M0 5.200L1.500 7.800H0z' fill='#e6c84a'/></svg>
<div class='t' style='left:283px;top:86.55px;font-size:5.8px;letter-spacing:0.009px;color:#2a2a2a;'>StyledText.class</div>
<svg class='a' style='left:339.55px;top:86.35px' width='7.5' height='8.5' viewBox='0 0 7.500 8.500'><path d='M1.500 .5h3.600L7 2.400V8H1.500z' fill='#fff' stroke='#9a9a9a' stroke-width='.5'/><circle cx='2.600' cy='5' r='2' fill='#4a6cc0'/><circle cx='3.400' cy='5.800' r='1.500' fill='#e8c44a'/><path d='M1.500 5h2.200' stroke='#fff' stroke-width='.5'/></svg>
<div class='t' style='left:349.5px;top:86.55px;font-size:5.8px;letter-spacing:0.054px;color:#2a2a2a;'>com.pauzies.m...</div>
<svg class='a' style='left:410.65px;top:86.35px' width='7.5' height='8.5' viewBox='0 0 7.500 8.500'><path d='M1 .5h3.600L6.500 2.400V8H1z' fill='#fdfdfd' stroke='#a89a6a' stroke-width='.55'/><path d='M4.300 2.600v3c0 .9-.5 1.300-1.500 1.200' stroke='#4a5cb0' stroke-width='.9' fill='none'/></svg>
<div class='t' style='left:420.8px;top:86.55px;font-size:5.8px;letter-spacing:0.012px;color:#2a2a2a;'>AbstractDecora...</div>
<svg class='a' style='left:482.05px;top:86.35px' width='7.5' height='8.5' viewBox='0 0 7.500 8.500'><path d='M1 .5h3.600L6.500 2.400V8H1z' fill='#fdfdfd' stroke='#a89a6a' stroke-width='.55'/><path d='M4.300 2.600v3c0 .9-.5 1.300-1.500 1.200' stroke='#4a5cb0' stroke-width='.9' fill='none'/></svg>
<div class='t' style='left:491.7px;top:86.55px;font-size:5.8px;letter-spacing:0.0px;color:#1a1a1a;'>MiniMapView.java</div>
<svg class='a' style='left:541.80px;top:88.60px' width='4.4' height='4.4' viewBox='0 0 4.4 4.4'><path d='M.6 .6L3.800 3.800M3.800 .6L.6 3.800' stroke='#8a8a8a' stroke-width='.9'/></svg>
<svg class='a' style='left:553.05px;top:86.35px' width='7.5' height='8.5' viewBox='0 0 7.500 8.500'><path d='M1 .5h3.600L6.500 2.400V8H1z' fill='#fff' stroke='#9a9a9a' stroke-width='.5'/><path d='M1.600 5.500h4M1.600 6.800h4' stroke='#3b5bb0' stroke-width='.8'/><path d='M2 4h1M3.500 4h1' stroke='#3b5bb0' stroke-width='.7'/><path d='M0 5.200L1.500 7.800H0z' fill='#e6c84a'/></svg>
<div class='t' style='left:562.5px;top:86.55px;font-size:5.8px;letter-spacing:-0.011px;color:#2a2a2a;'>SelectionServi...</div>
<svg class='a' style='left:623.8px;top:86.9px' width='6.4' height='3.6' viewBox='0 0 6.4 3.6'><rect x='.5' y='.5' width='5.4' height='2.5' rx='1' fill='#eee' stroke='#3a3a3a' stroke-width='.8'/></svg>
<svg class='a' style='left:635.2px;top:87.1px' width='6.4' height='6.4' viewBox='0 0 6.4 6.4'><rect x='.5' y='.5' width='5.4' height='5.2' rx='.4' fill='#fcfcfc' stroke='#3c3c3c' stroke-width='.65'/><rect x='.5' y='.5' width='5.4' height='1.3' fill='#3c3c3c'/></svg>
<div class='a' style='left:162.4px;top:97.1px;width:6.8px;height:275.4px;background:#fdfdfd'></div>
<div class='a' style='left:162.6px;top:97.1px;width:6.5px;height:83px;background:#d6dcf3'></div>
<div class='a' style='left:169.1px;top:97.1px;width:469.1px;height:275.4px;background:#293134'></div>
<div class='a' style='left:179px;top:97.1px;width:.6px;height:275.4px;background:#8c9092'></div>
<div class='a' style='left:180.4px;top:173.5px;width:457.8px;height:6.8px;background:#54574f'></div>
<div class='a' style='left:456.3px;top:97.1px;width:.6px;height:275.4px;background:#8a8d8e'></div>
<div class='ln' style='top:99.05px'>51</div>
<div class='ln' style='top:105.94px'>52</div>
<div class='code' style='left:180.5px;top:105.74px'>        <span class='k'>public</span> <span class='ty'>ISourceViewer</span> <span class='m'>getSourceViewer</span><span class='b'>(</span><span class='b'>)</span> <span class='b'>{</span></div>
<div class='ln' style='top:112.84px'>53</div>
<div class='code' style='left:180.5px;top:112.64px'>            <span class='k'>try</span> <span class='b'>{</span></div>
<div class='ln' style='top:119.73px'>54</div>
<div class='code' style='left:180.5px;top:119.53px'>                <span class='ty'>Method</span> <span class='v'>m</span> <span class='o'>=</span> <span class='ty'>AbstractTextEditor</span><span class='o'>.</span><span class='k'>class</span><span class='o'>.</span><span class='m'>getDeclaredMethod</span><span class='b'>(</span><span class='s'>"getSourceViewer"</span><span class='b'>)</span><span class='o'>;</span></div>
<div class='ln' style='top:126.63px'>55</div>
<div class='code' style='left:180.5px;top:126.43px'>                <span class='v'>m</span><span class='o'>.</span><span class='m'>setAccessible</span><span class='b'>(</span><span class='k'>true</span><span class='b'>)</span><span class='o'>;</span></div>
<div class='ln' style='top:133.52px'>56</div>
<div class='code' style='left:180.5px;top:133.32px'>                <span class='k'>return</span> <span class='b'>(</span><span class='ty'>ISourceViewer</span><span class='b'>)</span> <span class='v'>m</span><span class='o'>.</span><span class='m'>invoke</span><span class='b'>(</span><span class='f'>editor</span><span class='b'>)</span><span class='o'>;</span></div>
<div class='ln' style='top:140.42px'>57</div>
<div class='code' style='left:180.5px;top:140.22px'>            <span class='b'>}</span> <span class='k'>catch</span> <span class='b'>(</span><span class='ty'>Exception</span> <span class='v'>e</span><span class='b'>)</span> <span class='b'>{</span></div>
<div class='ln' style='top:147.31px'>58</div>
<div class='code' style='left:180.5px;top:147.12px'>                <span class='v'>e</span><span class='o'>.</span><span class='m'>printStackTrace</span><span class='b'>(</span><span class='b'>)</span><span class='o'>;</span></div>
<div class='ln' style='top:154.21px'>59</div>
<div class='code' style='left:180.5px;top:154.01px'>            <span class='b'>}</span></div>
<div class='ln' style='top:161.10px'>60</div>
<div class='code' style='left:180.5px;top:160.90px'>            <span class='k'>return</span> <span class='k'>null</span><span class='o'>;</span></div>
<div class='ln' style='top:168.00px'>61</div>
<div class='code' style='left:180.5px;top:167.80px'>        <span class='b'>}</span></div>
<div class='ln' style='top:174.89px'>62</div>
<div class='code' style='left:180.5px;top:174.69px'>    <span class='b'>}</span></div>
<div class='ln' style='top:181.79px'>63</div>
<div class='ln' style='top:188.68px'>64</div>
<div class='code' style='left:180.5px;top:188.48px'>    <span class='k'>private</span> <span class='k'>static</span> <span class='k'>void</span> <span class='m'>fillMiniMap</span><span class='b'>(</span><span class='ty'>StyledText</span> <span class='v'>minimap</span><span class='o'>,</span> <span class='ty'>MyTextEditor</span> <span class='v'>editor</span><span class='b'>)</span> <span class='b'>{</span></div>
<div class='ln' style='top:195.58px'>65</div>
<div class='code' style='left:180.5px;top:195.38px'>        <span class='ty'>StyledText</span> <span class='v'>text</span> <span class='o'>=</span> <span class='f'>editor</span><span class='o'>.</span><span class='m'>getSourceViewer</span><span class='b'>(</span><span class='b'>)</span><span class='o'>.</span><span class='m'>getTextWidget</span><span class='b'>(</span><span class='b'>)</span><span class='o'>;</span></div>
<div class='ln' style='top:202.47px'>66</div>
<div class='code' style='left:180.5px;top:202.27px'>        <span class='f'>minimap</span><span class='o'>.</span><span class='m'>setContent</span><span class='b'>(</span><span class='v'>text</span><span class='o'>.</span><span class='m'>getContent</span><span class='b'>(</span><span class='b'>)</span><span class='b'>)</span><span class='o'>;</span></div>
<div class='ln' style='top:209.37px'>67</div>
<div class='code' style='left:180.5px;top:209.17px'>        <span class='f'>minimap</span><span class='o'>.</span><span class='m'>setStyleRanges</span><span class='b'>(</span><span class='f'>editor</span><span class='o'>.</span><span class='m'>getSourceViewer</span><span class='b'>(</span><span class='b'>)</span><span class='o'>.</span><span class='m'>getTextWidget</span><span class='b'>(</span><span class='b'>)</span><span class='o'>.</span><span class='m'>getStyleRanges</span><span class='b'>(</span><span class='b'>)</span><span class='b'>)</span><span class='o'>;</span></div>
<div class='ln' style='top:216.26px'>68</div>
<div class='code' style='left:180.5px;top:216.06px'>    <span class='b'>}</span></div>
<div class='ln' style='top:223.16px'>69</div>
<div class='ln' style='top:230.05px'>70</div>
<div class='code' style='left:180.5px;top:229.85px'>    <span class='k'>private</span> <span class='k'>void</span> <span class='m'>highlightVisibleRegion</span><span class='b'>(</span><span class='ty'>StyledText</span> <span class='v'>minimap</span><span class='o'>,</span> <span class='ty'>MyTextEditor</span> <span class='v'>editor</span><span class='b'>)</span> <span class='b'>{</span></div>
<div class='ln' style='top:236.95px'>71</div>
<div class='code' style='left:180.5px;top:236.75px'>        <span class='k'>int</span> <span class='v'>start</span> <span class='o'>=</span> <span class='f'>editor</span><span class='o'>.</span><span class='m'>getSourceViewer</span><span class='b'>(</span><span class='b'>)</span><span class='o'>.</span><span class='m'>getTopIndexStartOffset</span><span class='b'>(</span><span class='b'>)</span><span class='o'>;</span></div>
<div class='ln' style='top:243.84px'>72</div>
<div class='code' style='left:180.5px;top:243.64px'>        <span class='k'>int</span> <span class='v'>end</span> <span class='o'>=</span> <span class='f'>editor</span><span class='o'>.</span><span class='m'>getSourceViewer</span><span class='b'>(</span><span class='b'>)</span><span class='o'>.</span><span class='m'>getBottomIndexEndOffset</span><span class='b'>(</span><span class='b'>)</span><span class='o'>;</span></div>
<div class='ln' style='top:250.74px'>73</div>
<div class='code' style='left:180.5px;top:250.54px'>        <span class='k'>int</span> <span class='v'>startLine</span> <span class='o'>=</span> <span class='f'>minimap</span><span class='o'>.</span><span class='m'>getLineAtOffset</span><span class='b'>(</span><span class='v'>start</span><span class='b'>)</span><span class='o'>;</span></div>
<div class='ln' style='top:257.63px'>74</div>
<div class='code' style='left:180.5px;top:257.43px'>        <span class='k'>int</span> <span class='v'>endLine</span> <span class='o'>=</span> <span class='f'>minimap</span><span class='o'>.</span><span class='m'>getLineAtOffset</span><span class='b'>(</span><span class='v'>end</span><span class='b'>)</span><span class='o'>;</span></div>
<div class='ln' style='top:264.53px'>75</div>
<div class='code' style='left:180.5px;top:264.33px'>        <span class='c'>// Reset</span></div>
<div class='ln' style='top:271.43px'>76</div>
<div class='code' style='left:180.5px;top:271.23px'>        <span class='f'>minimap</span><span class='o'>.</span><span class='m'>setLineBackground</span><span class='b'>(</span><span class='n'>0</span><span class='o'>,</span> <span class='f'>minimap</span><span class='o'>.</span><span class='m'>getLineCount</span><span class='b'>(</span><span class='b'>)</span> <span class='o'>-</span> <span class='n'>1</span><span class='o'>,</span> <span class='f'>backgroundColor</span><span class='b'>)</span><span class='o'>;</span></div>
<div class='ln' style='top:278.32px'>77</div>
<div class='code' style='left:180.5px;top:278.12px'>        <span class='f'>minimap</span><span class='o'>.</span><span class='m'>setLineBackground</span><span class='b'>(</span><span class='v'>startLine</span><span class='o'>,</span> <span class='v'>endLine</span> <span class='o'>-</span> <span class='v'>startLine</span> <span class='o'>+</span> <span class='n'>1</span><span class='o'>,</span> <span class='f'>selectionBackgroundColor</span><span class='b'>)</span><span class='o'>;</span></div>
<div class='ln' style='top:285.21px'>78</div>
<div class='code' style='left:180.5px;top:285.01px'>        <span class='c'>// minimap.setSelection(minimap.getOffsetAtLine(startLine),</span></div>
<div class='ln' style='top:292.11px'>79</div>
<div class='code' style='left:180.5px;top:291.91px'>        <span class='c'>// minimap.getOffsetAtLine(endLine - startLine +1));</span></div>
<div class='ln' style='top:299.00px'>80</div>
<div class='code' style='left:180.5px;top:298.80px'>    <span class='b'>}</span></div>
<div class='ln' style='top:305.90px'>81</div>
<div class='ln' style='top:312.79px'>82</div>
<div class='code' style='left:180.5px;top:312.59px'>    <span class='k'>private</span> <span class='k'>void</span> <span class='m'>changeEditor</span><span class='b'>(</span><span class='ty'>MouseEvent</span> <span class='v'>e</span><span class='b'>)</span> <span class='b'>{</span></div>
<div class='ln' style='top:319.69px'>83</div>
<div class='code' style='left:180.5px;top:319.49px'>        <span class='ty'>StyledText</span> <span class='v'>text</span> <span class='o'>=</span> <span class='b'>(</span><span class='ty'>StyledText</span><span class='b'>)</span> <span class='v'>e</span><span class='o'>.</span><span class='m'>getSource</span><span class='b'>(</span><span class='b'>)</span><span class='o'>;</span></div>
<div class='ln' style='top:326.58px'>84</div>
<div class='code' style='left:180.5px;top:326.38px'>        <span class='k'>int</span> <span class='v'>line</span> <span class='o'>=</span> <span class='v'>text</span><span class='o'>.</span><span class='m'>getLineAtOffset</span><span class='b'>(</span><span class='v'>text</span><span class='o'>.</span><span class='m'>getCaretOffset</span><span class='b'>(</span><span class='b'>)</span><span class='b'>)</span><span class='o'>;</span></div>
<div class='ln' style='top:333.48px'>85</div>
<div class='code' style='left:180.5px;top:333.28px'>        <span class='c'>// editor.getSourceViewer().getTextWidget().setCaretOffset(text.getCaretOffset());</span></div>
<div class='ln' style='top:340.37px'>86</div>
<div class='code' style='left:180.5px;top:340.17px'>        <span class='f'>editor</span><span class='o'>.</span><span class='m'>getSourceViewer</span><span class='b'>(</span><span class='b'>)</span><span class='o'>.</span><span class='m'>getTextWidget</span><span class='b'>(</span><span class='b'>)</span><span class='o'>.</span><span class='m'>setTopIndex</span><span class='b'>(</span><span class='v'>line</span><span class='b'>)</span><span class='o'>;</span></div>
<div class='ln' style='top:347.27px'>87</div>
<div class='code' style='left:180.5px;top:347.07px'>    <span class='b'>}</span></div>
<div class='ln' style='top:354.16px'>88</div>
<div class='ln' style='top:361.06px'>89</div>
<div class='code' style='left:180.5px;top:360.86px'>    <span class='k'>private</span> <span class='k'>final</span> <span class='ty'>MouseListener</span> <span class='f'>minimapMouseListener</span> <span class='o'>=</span> <span class='k'>new</span> <span class='ty'>MouseAdapter</span><span class='b'>(</span><span class='b'>)</span> <span class='b'>{</span></div>
<div class='ln' style='top:367.95px'>90</div>
<div class='code' style='left:180.5px;top:367.75px'>        <span class='an'>@Override</span></div>
<div class='panel' style='left:652.3px;top:84.3px;width:140.9px;height:291.3px'><div class='tabbar'></div><div class='atab' style='left:0;width:43px'></div></div>
<svg class='a' style='left:654.75px;top:86.85px' width='7.5' height='7.5' viewBox='0 0 7.5 7.5'><rect x='.5' y='.6' width='2' height='1.800' fill='#eef2ff' stroke='#6a88d4' stroke-width='.55'/><rect x='.5' y='3.400' width='2' height='1.800' fill='#eef2ff' stroke='#6a88d4' stroke-width='.55'/><rect x='.5' y='5.800' width='2' height='1.500' fill='#eef2ff' stroke='#6a88d4' stroke-width='.55'/><path d='M3.600 1.500h3.200M3.600 4.300h3.200M3.600 6.600h3.200' stroke='#7a92d0' stroke-width='.6'/><path d='M3.600 1.500h1.600M3.600 4.300h1.600' stroke='#4a5a90' stroke-width='.6'/></svg>
<div class='t' style='left:664px;top:86.55px;font-size:5.8px;letter-spacing:0.061px;color:#1a1a1a;'>Outline</div>
<svg class='a' style='left:687.20px;top:88.60px' width='4.4' height='4.4' viewBox='0 0 4.4 4.4'><path d='M.6 .6L3.800 3.800M3.800 .6L.6 3.800' stroke='#8a8a8a' stroke-width='.9'/></svg>
<svg class='a' style='left:770.8px;top:86.9px' width='6.4' height='3.6' viewBox='0 0 6.4 3.6'><rect x='.5' y='.5' width='5.4' height='2.5' rx='1' fill='#eee' stroke='#3a3a3a' stroke-width='.8'/></svg>
<svg class='a' style='left:781.8px;top:87.1px' width='6.4' height='6.4' viewBox='0 0 6.4 6.4'><rect x='.5' y='.5' width='5.4' height='5.2' rx='.4' fill='#fcfcfc' stroke='#3c3c3c' stroke-width='.65'/><rect x='.5' y='.5' width='5.4' height='1.3' fill='#3c3c3c'/></svg>
<svg class='a' style='left:716.50px;top:99.50px' width='7' height='7' viewBox='0 0 7 7'><rect x='.6' y='.8' width='5.800' height='5.400' fill='#fafbff' stroke='#a4b4dc' stroke-width='.7'/><path d='M1.800 3.500h3.400' stroke='#8a9ccc' stroke-width='.7'/></svg>
<div class='a' style='left:725.3px;top:98.2px;width:9.6px;height:9.6px;background:#cfcfcf;border:.5px solid #b4b4b4;box-sizing:border-box;border-radius:1px'></div>
<svg class='a' style='left:726.20px;top:99.00px' width='8' height='8' viewBox='0 0 8 8'><path d='M2 .8v5.500M.6 5l1.400 1.600L3.400 5' stroke='#444' stroke-width='.7' fill='none'/><text x='3.800' y='3.600' font-size='3.800' font-family='Liberation Sans,sans-serif' fill='#3a7a3a' font-weight='bold'>a</text><text x='4.200' y='7.600' font-size='3.800' font-family='Liberation Sans,sans-serif' fill='#7a3a9a' font-weight='bold'>z</text></svg>
<svg class='a' style='left:737.00px;top:99.00px' width='8' height='8' viewBox='0 0 8 8'><rect x='2.600' y='2.600' width='2.600' height='2.600' fill='#8c9cdc'/><path d='M1 1.400L7 7' stroke='#34449a' stroke-width='1.100'/><rect x='2' y='1.800' width='3.600' height='3.400' fill='none' stroke='#5a70c0' stroke-width='.6'/></svg>
<svg class='a' style='left:748.00px;top:99.00px' width='8' height='8' viewBox='0 0 8 8'><rect x='2.600' y='2.600' width='2.600' height='2.600' fill='#8c9cdc'/><path d='M1 1.400L7 7' stroke='#34449a' stroke-width='1.100'/><text x='5.200' y='3.200' font-size='3.400' font-family='Liberation Sans,sans-serif' fill='#c03030' font-weight='bold'>S</text></svg>
<svg class='a' style='left:760.80px;top:101.30px' width='4' height='4' viewBox='0 0 4 4'><circle cx='2' cy='2' r='1.600' fill='#4fa646' stroke='#2f7a2c' stroke-width='.4'/></svg>
<svg class='a' style='left:769.60px;top:99.00px' width='8' height='8' viewBox='0 0 8 8'><rect x='2.600' y='2.600' width='2.600' height='2.600' fill='#8c9cdc'/><path d='M1 1.400L7 7' stroke='#34449a' stroke-width='1.100'/><text x='5.400' y='3.200' font-size='3.400' font-family='Liberation Sans,sans-serif' fill='#3050b0' font-weight='bold'>L</text></svg>
<svg class='a' style='left:784.90px;top:98.90px' width='5' height='3.4' viewBox='0 0 5 3.4'><path d='M.6 .5h3.800L2.500 2.800z' fill='#fff' stroke='#444' stroke-width='.7'/></svg>
<div class='a' style='left:653.6px;top:125.9px;width:137.6px;height:6.6px;background:#d4d4d4'></div>
<div class='a' style='left:653px;top:97px;width:138.3px;height:276px;overflow:hidden'>
<svg class='a' style='left:10.50px;top:11.70px' width='7' height='7' viewBox='0 0 7 7'><rect x='.8' y='.8' width='5.400' height='5.400' fill='#f4ecc0' stroke='#b8a454' stroke-width='.5'/><path d='M.8 2.600h5.400M.8 4.400h5.400M2.600 .8v5.400M4.400 .8v5.400' stroke='#9a8838' stroke-width='.7'/></svg>
<div class='t' style='left:22px;top:11.05px;font-size:5.98px;color:#1c1c1c'>com.pauzies.minimap.views<span class='ty2'></span></div>
<svg class='a' style='left:4.20px;top:21.07px' width='5' height='5' viewBox='0 0 5 5'><path d='M.5 1.200h4L2.500 4.200z' fill='#6e6e6e'/></svg>
<svg class='a' style='left:10.20px;top:19.77px' width='7.6' height='7.6' viewBox='0 0 7.6 7.6'><circle cx='3.800' cy='3.800' r='2.900' fill='#66b45e' stroke='#3a8a36' stroke-width='.5'/><path d='M5.100 2.800A1.700 1.700 0 1 0 5.200 4.800' stroke='#fff' stroke-width='.85' fill='none'/></svg>
<div class='t' style='left:22px;top:19.42px;font-size:5.98px;color:#1c1c1c'>MiniMapView<span class='ty2'></span></div>
<svg class='a' style='left:12.10px;top:29.44px' width='5' height='5' viewBox='0 0 5 5'><path d='M1.200 .5v4L4.200 2.500z' fill='#6e6e6e'/></svg>
<svg class='a' style='left:18.40px;top:28.14px' width='7.6' height='7.6' viewBox='0 0 7.6 7.6'><circle cx='3.800' cy='3.800' r='2.900' fill='#66b45e' stroke='#3a8a36' stroke-width='.5'/><path d='M5.100 2.800A1.700 1.700 0 1 0 5.200 4.800' stroke='#fff' stroke-width='.85' fill='none'/><path d='M4.500 7.600h3.100L6 5z' fill='#3a52b8'/></svg>
<div class='t' style='left:30px;top:27.79px;font-size:5.98px;color:#1c1c1c'>MyTextEditor<span class='ty2'></span></div>
<svg class='a' style='left:19.90px;top:39.21px' width='3.4' height='3.4' viewBox='0 0 3.4 3.4'><circle cx='1.700' cy='1.700' r='1.100' fill='#e8f4e4' stroke='#3f9a3c' stroke-width='.7'/></svg>
<div class='t' style='left:23.8px;top:34.81px;font-size:4.6px;color:#d06060;text-shadow:none'>S</div>
<div class='t' style='left:26.6px;top:34.81px;font-size:4.6px;color:#7088d8;text-shadow:none'>F</div>
<div class='t' style='left:30px;top:36.16px;font-size:5.98px;color:#1c1c1c'>ID<span class='ty2'> : String</span></div>
<svg class='a' style='left:20.10px;top:47.68px' width='3.6' height='3.6' viewBox='0 0 3.6 3.6'><rect x='.3' y='.3' width='3' height='3' fill='#c8403c' stroke='#8e2420' stroke-width='.4'/></svg>
<div class='t' style='left:25.4px;top:43.18px;font-size:4.6px;color:#d06060;text-shadow:none'>S</div>
<div class='t' style='left:30px;top:44.53px;font-size:5.98px;color:#1c1c1c'>fillMiniMap(StyledText, MyTextEditor)<span class='ty2'> : void</span></div>
<svg class='a' style='left:20.60px;top:55.75px' width='3.2' height='3.2' viewBox='0 0 3.2 3.2'><rect x='.6' y='.6' width='2' height='2' fill='#fbeaea' stroke='#c03c38' stroke-width='.65'/></svg>
<div class='t' style='left:30px;top:52.90px;font-size:5.98px;color:#1c1c1c'>backgroundColor<span class='ty2'> : Color</span></div>
<svg class='a' style='left:20.60px;top:64.12px' width='3.2' height='3.2' viewBox='0 0 3.2 3.2'><rect x='.6' y='.6' width='2' height='2' fill='#fbeaea' stroke='#c03c38' stroke-width='.65'/></svg>
<div class='t' style='left:30px;top:61.27px;font-size:5.98px;color:#1c1c1c'>editor<span class='ty2'> : MyTextEditor</span></div>
<svg class='a' style='left:12.10px;top:71.29px' width='5' height='5' viewBox='0 0 5 5'><path d='M1.200 .5v4L4.200 2.500z' fill='#6e6e6e'/></svg>
<svg class='a' style='left:20.60px;top:72.49px' width='3.2' height='3.2' viewBox='0 0 3.2 3.2'><rect x='.6' y='.6' width='2' height='2' fill='#fbeaea' stroke='#c03c38' stroke-width='.65'/></svg>
<div class='t' style='left:25.8px;top:68.29px;font-size:4.6px;color:#7088d8;text-shadow:none'>F</div>
<div class='t' style='left:30px;top:69.64px;font-size:5.98px;color:#1c1c1c'>editorControlListener<span class='ty2'> : ControlListener</span></div>
<svg class='a' style='left:12.10px;top:79.66px' width='5' height='5' viewBox='0 0 5 5'><path d='M1.200 .5v4L4.200 2.500z' fill='#6e6e6e'/></svg>
<svg class='a' style='left:20.60px;top:80.86px' width='3.2' height='3.2' viewBox='0 0 3.2 3.2'><rect x='.6' y='.6' width='2' height='2' fill='#fbeaea' stroke='#c03c38' stroke-width='.65'/></svg>
<div class='t' style='left:25.8px;top:76.66px;font-size:4.6px;color:#7088d8;text-shadow:none'>F</div>
<div class='t' style='left:30px;top:78.01px;font-size:5.98px;color:#1c1c1c'>editorSegmentListener<span class='ty2'> : BidiSegmentListener</span></div>
<svg class='a' style='left:12.10px;top:88.03px' width='5' height='5' viewBox='0 0 5 5'><path d='M1.200 .5v4L4.200 2.500z' fill='#6e6e6e'/></svg>
<svg class='a' style='left:20.60px;top:89.23px' width='3.2' height='3.2' viewBox='0 0 3.2 3.2'><rect x='.6' y='.6' width='2' height='2' fill='#fbeaea' stroke='#c03c38' stroke-width='.65'/></svg>
<div class='t' style='left:25.8px;top:85.03px;font-size:4.6px;color:#7088d8;text-shadow:none'>F</div>
<div class='t' style='left:30px;top:86.38px;font-size:5.98px;color:#1c1c1c'>editorSelectionListener<span class='ty2'> : ISelectionListener</span></div>
<svg class='a' style='left:20.60px;top:97.60px' width='3.2' height='3.2' viewBox='0 0 3.2 3.2'><rect x='.6' y='.6' width='2' height='2' fill='#fbeaea' stroke='#c03c38' stroke-width='.65'/></svg>
<div class='t' style='left:30px;top:94.75px;font-size:5.98px;color:#1c1c1c'>font<span class='ty2'> : Font</span></div>
<svg class='a' style='left:20.60px;top:105.97px' width='3.2' height='3.2' viewBox='0 0 3.2 3.2'><rect x='.6' y='.6' width='2' height='2' fill='#fbeaea' stroke='#c03c38' stroke-width='.65'/></svg>
<div class='t' style='left:30px;top:103.12px;font-size:5.98px;color:#1c1c1c'>foregroundColor<span class='ty2'> : Color</span></div>
<svg class='a' style='left:20.60px;top:114.34px' width='3.2' height='3.2' viewBox='0 0 3.2 3.2'><rect x='.6' y='.6' width='2' height='2' fill='#fbeaea' stroke='#c03c38' stroke-width='.65'/></svg>
<div class='t' style='left:30px;top:111.49px;font-size:5.98px;color:#1c1c1c'>minimap<span class='ty2'> : StyledText</span></div>
<svg class='a' style='left:12.10px;top:121.51px' width='5' height='5' viewBox='0 0 5 5'><path d='M1.200 .5v4L4.200 2.500z' fill='#6e6e6e'/></svg>
<svg class='a' style='left:20.60px;top:122.71px' width='3.2' height='3.2' viewBox='0 0 3.2 3.2'><rect x='.6' y='.6' width='2' height='2' fill='#fbeaea' stroke='#c03c38' stroke-width='.65'/></svg>
<div class='t' style='left:25.8px;top:118.51px;font-size:4.6px;color:#7088d8;text-shadow:none'>F</div>
<div class='t' style='left:30px;top:119.86px;font-size:5.98px;color:#1c1c1c'>minimapMouseListener<span class='ty2'> : MouseListener</span></div>
<svg class='a' style='left:12.10px;top:129.88px' width='5' height='5' viewBox='0 0 5 5'><path d='M1.200 .5v4L4.200 2.500z' fill='#6e6e6e'/></svg>
<svg class='a' style='left:20.60px;top:131.08px' width='3.2' height='3.2' viewBox='0 0 3.2 3.2'><rect x='.6' y='.6' width='2' height='2' fill='#fbeaea' stroke='#c03c38' stroke-width='.65'/></svg>
<div class='t' style='left:25.8px;top:126.88px;font-size:4.6px;color:#7088d8;text-shadow:none'>F</div>
<div class='t' style='left:30px;top:128.23px;font-size:5.98px;color:#1c1c1c'>minimapMouseMoveListener<span class='ty2'> : MouseMoveListener</span></div>
<svg class='a' style='left:12.10px;top:138.25px' width='5' height='5' viewBox='0 0 5 5'><path d='M1.200 .5v4L4.200 2.500z' fill='#6e6e6e'/></svg>
<svg class='a' style='left:20.60px;top:139.45px' width='3.2' height='3.2' viewBox='0 0 3.2 3.2'><rect x='.6' y='.6' width='2' height='2' fill='#fbeaea' stroke='#c03c38' stroke-width='.65'/></svg>
<div class='t' style='left:25.8px;top:135.25px;font-size:4.6px;color:#7088d8;text-shadow:none'>F</div>
<div class='t' style='left:30px;top:136.60px;font-size:5.98px;color:#1c1c1c'>minimapMouseWheelListener<span class='ty2'> : MouseWheelListener</span></div>
<svg class='a' style='left:12.10px;top:146.62px' width='5' height='5' viewBox='0 0 5 5'><path d='M1.200 .5v4L4.200 2.500z' fill='#6e6e6e'/></svg>
<svg class='a' style='left:20.60px;top:147.82px' width='3.2' height='3.2' viewBox='0 0 3.2 3.2'><rect x='.6' y='.6' width='2' height='2' fill='#fbeaea' stroke='#c03c38' stroke-width='.65'/></svg>
<div class='t' style='left:25.8px;top:143.62px;font-size:4.6px;color:#7088d8;text-shadow:none'>F</div>
<div class='t' style='left:30px;top:144.97px;font-size:5.98px;color:#1c1c1c'>minimapSelectionListener<span class='ty2'> : SelectionListener</span></div>
<svg class='a' style='left:20.60px;top:156.19px' width='3.2' height='3.2' viewBox='0 0 3.2 3.2'><rect x='.6' y='.6' width='2' height='2' fill='#fbeaea' stroke='#c03c38' stroke-width='.65'/></svg>
<div class='t' style='left:30px;top:153.34px;font-size:5.98px;color:#1c1c1c'>mouseIsDown<span class='ty2'> : boolean</span></div>
<svg class='a' style='left:20.60px;top:164.56px' width='3.2' height='3.2' viewBox='0 0 3.2 3.2'><rect x='.6' y='.6' width='2' height='2' fill='#fbeaea' stroke='#c03c38' stroke-width='.65'/></svg>
<div class='t' style='left:30px;top:161.71px;font-size:5.98px;color:#1c1c1c'>selectedPart<span class='ty2'> : AbstractTextEditor</span></div>
<svg class='a' style='left:20.60px;top:172.93px' width='3.2' height='3.2' viewBox='0 0 3.2 3.2'><rect x='.6' y='.6' width='2' height='2' fill='#fbeaea' stroke='#c03c38' stroke-width='.65'/></svg>
<div class='t' style='left:30px;top:170.08px;font-size:5.98px;color:#1c1c1c'>selectionBackgroundColor<span class='ty2'> : Color</span></div>
<svg class='a' style='left:20.60px;top:181.30px' width='3.2' height='3.2' viewBox='0 0 3.2 3.2'><rect x='.6' y='.6' width='2' height='2' fill='#fbeaea' stroke='#c03c38' stroke-width='.65'/></svg>
<div class='t' style='left:30px;top:178.45px;font-size:5.98px;color:#1c1c1c'>selectionForegroundColor<span class='ty2'> : Color</span></div>
<svg class='a' style='left:20.10px;top:189.37px' width='3.8' height='3.8' viewBox='0 0 3.8 3.8'><rect x='.3' y='.3' width='3.200' height='3.200' fill='#cc4a46' stroke='#9a2a26' stroke-width='.4'/></svg>
<div class='t' style='left:30px;top:186.82px;font-size:5.98px;color:#1c1c1c'>changeEditor(MouseEvent)<span class='ty2'> : void</span></div>
<svg class='a' style='left:19.80px;top:197.44px' width='4.2' height='4.2' viewBox='0 0 4.2 4.2'><circle cx='2.100' cy='2.100' r='1.800' fill='#58ac4e' stroke='#2f7a2c' stroke-width='.4'/></svg>
<svg class='a' style='left:25.10px;top:199.94px' width='3.4' height='2.4' viewBox='0 0 3.4 2.4'><path d='M.2 2.200h3L1.700 .3z' fill='#6a5ac0'/></svg>
<div class='t' style='left:30px;top:195.19px;font-size:5.98px;color:#1c1c1c'>createPartControl(Composite)<span class='ty2'> : void</span></div>
<svg class='a' style='left:19.80px;top:205.81px' width='4.2' height='4.2' viewBox='0 0 4.2 4.2'><circle cx='2.100' cy='2.100' r='1.800' fill='#58ac4e' stroke='#2f7a2c' stroke-width='.4'/></svg>
<svg class='a' style='left:25.10px;top:208.31px' width='3.4' height='2.4' viewBox='0 0 3.4 2.4'><path d='M.2 2.200h3L1.700 .3z' fill='#6a5ac0'/></svg>
<div class='t' style='left:30px;top:203.56px;font-size:5.98px;color:#1c1c1c'>dispose()<span class='ty2'> : void</span></div>
<svg class='a' style='left:20.10px;top:214.48px' width='3.8' height='3.8' viewBox='0 0 3.8 3.8'><rect x='.3' y='.3' width='3.200' height='3.200' fill='#cc4a46' stroke='#9a2a26' stroke-width='.4'/></svg>
<div class='t' style='left:30px;top:211.93px;font-size:5.98px;color:#1c1c1c'>highlightVisibleRegion(StyledText, MyTextEditor)<span class='ty2'> : void</span></div>
<svg class='a' style='left:19.80px;top:222.55px' width='4.2' height='4.2' viewBox='0 0 4.2 4.2'><circle cx='2.100' cy='2.100' r='1.800' fill='#58ac4e' stroke='#2f7a2c' stroke-width='.4'/></svg>
<svg class='a' style='left:25.10px;top:225.05px' width='3.4' height='2.4' viewBox='0 0 3.4 2.4'><path d='M.2 2.200h3L1.700 .3z' fill='#6a5ac0'/></svg>
<div class='t' style='left:30px;top:220.30px;font-size:5.98px;color:#1c1c1c'>setFocus()<span class='ty2'> : void</span></div>
</div>
<div class='panel' style='left:161.5px;top:379.4px;width:631.7px;height:133.6px'><div class='tabbar'></div><div class='atab' style='left:118.2px;width:45px'></div></div>
<svg class='a' style='left:163.30px;top:382.30px' width='7' height='8' viewBox='0 0 7 8'><rect x='1' y='.8' width='5' height='6.400' fill='#fff' stroke='#9a9a9a' stroke-width='.5'/><rect x='1.600' y='1.400' width='1.400' height='2' fill='#d84a3a'/><path d='M.6 7.200L2 4.600l1.400 2.600z' fill='#f0c83c' stroke='#a8862a' stroke-width='.3'/><path d='M3.600 2h2M3.600 3.400h2M3.600 5h2' stroke='#bbb' stroke-width='.5'/></svg>
<div class='t' style='left:173.5px;top:381.60px;font-size:5.8px;letter-spacing:-0.123px;color:#2a2a2a'>Problems</div>
<div class='t' style='left:203.2px;top:382.10px;font-size:5.8px;color:#7090d4;font-weight:bold;text-shadow:none'>@</div>
<div class='t' style='left:212px;top:381.60px;font-size:5.8px;letter-spacing:-0.228px;color:#2a2a2a'>Javadoc</div>
<svg class='a' style='left:236.25px;top:382.30px' width='7.5' height='8' viewBox='0 0 7.5 8'><path d='M1 .5h3.600L6.500 2.400V7.500H1z' fill='#fdfdfd' stroke='#9a9a9a' stroke-width='.5'/><path d='M2 3h3M2 4.500h3' stroke='#8a9ac8' stroke-width='.6'/><path d='M3.600 7.800L5.400 4.600l1.800 3.200z' fill='#f0c83c' stroke='#a8862a' stroke-width='.3'/></svg>
<div class='t' style='left:247px;top:381.60px;font-size:5.8px;letter-spacing:0.061px;color:#2a2a2a'>Declaration</div>
<svg class='a' style='left:281.20px;top:382.70px' width='7.6' height='7.4' viewBox='0 0 7.6 7.4'><rect x='.8' y='.8' width='6' height='4.400' rx='.6' fill='#dfe6fa' stroke='#4a5cb4' stroke-width='.8'/><rect x='1.800' y='1.700' width='4' height='2.500' fill='#f4f6ff'/><path d='M2.200 6.200h3.200' stroke='#4a5cb4' stroke-width='.9'/></svg>
<div class='t' style='left:291px;top:381.60px;font-size:5.8px;letter-spacing:-0.04px;color:#1a1a1a'>Console</div>
<svg class='a' style='left:315.8px;top:383.60px' width='4.4' height='4.4' viewBox='0 0 4.4 4.4'><path d='M.6 .6L3.800 3.800M3.800 .6L.6 3.800' stroke='#8a8a8a' stroke-width='.9'/></svg>
<svg class='a' style='left:327.00px;top:383.70px' width='8' height='6' viewBox='0 0 8 6'><rect x='.5' y='.8' width='5' height='2.600' fill='#e8f4e0' stroke='#5a9a4a' stroke-width='.6'/><rect x='1' y='1.300' width='2.600' height='1.600' fill='#5aae4a'/><rect x='2.600' y='3.600' width='5' height='2' fill='#e4e4e4' stroke='#8a8a8a' stroke-width='.5'/></svg>
<div class='t' style='left:336px;top:381.60px;font-size:5.8px;letter-spacing:-0.025px;color:#2a2a2a'>Progress</div>
<svg class='a' style='left:365.10px;top:383.00px' width='7.4' height='6.6' viewBox='0 0 7.4 6.6'><rect x='.5' y='.5' width='6.400' height='5.600' fill='#fff' stroke='#8a8ab8' stroke-width='.6'/><path d='M.5 2h6.400M3 2v4' stroke='#a8a8c8' stroke-width='.5'/></svg>
<div class='t' style='left:374px;top:381.60px;font-size:5.8px;letter-spacing:0.058px;color:#2a2a2a'>Properties</div>
<svg class='a' style='left:730.50px;top:382.20px' width='7' height='7' viewBox='0 0 7 7'><rect x='1.500' y='2.500' width='4.500' height='3.500' fill='#efefef' stroke='#dadada' stroke-width='.5'/><path d='M4 1l2 2' stroke='#e4e4e4' stroke-width='1'/></svg>
<svg class='a' style='left:740.30px;top:381.90px' width='7.4' height='7' viewBox='0 0 7.4 7'><rect x='.6' y='.6' width='6.200' height='4.800' rx='.6' fill='#d4dcf4' stroke='#8a98c8' stroke-width='.8'/><rect x='1.800' y='1.700' width='3.800' height='2.400' fill='#f4f6fc'/><path d='M2.400 6.300h2.800' stroke='#8a98c8' stroke-width='.8'/></svg>
<svg class='a' style='left:748.8px;top:384.9px' width='4' height='3' viewBox='0 0 4 3'><path d='M.2 .3h3.600L2 2.700z' fill='#777'/></svg>
<svg class='a' style='left:755.00px;top:381.70px' width='8' height='8' viewBox='0 0 8 8'><rect x='.6' y='2' width='5.800' height='5.200' fill='#fdfdf4' stroke='#8e98b4' stroke-width='.6'/><rect x='.6' y='2' width='5.800' height='1.400' fill='#6a86c8'/><path d='M6.300 0l.6 1.300 1.400.2-1 1 .2 1.400-1.200-.7-1.200.7.2-1.400-1-1 1.400-.2z' fill='#f3d646' stroke='#b89a20' stroke-width='.25'/></svg>
<svg class='a' style='left:764.1px;top:384.9px' width='4' height='3' viewBox='0 0 4 3'><path d='M.2 .3h3.600L2 2.700z' fill='#222'/></svg>
<svg class='a' style='left:770.8px;top:382.0px' width='6.4' height='3.6' viewBox='0 0 6.4 3.6'><rect x='.5' y='.5' width='5.4' height='2.5' rx='1' fill='#eee' stroke='#3a3a3a' stroke-width='.8'/></svg>
<svg class='a' style='left:781.5px;top:382.6px' width='6.4' height='6.4' viewBox='0 0 6.4 6.4'><rect x='.5' y='.5' width='5.4' height='5.2' rx='.4' fill='#fcfcfc' stroke='#3c3c3c' stroke-width='.65'/><rect x='.5' y='.5' width='5.4' height='1.3' fill='#3c3c3c'/></svg>
<div class='a' style='left:447.7px;top:515.5px;width:.6px;height:10.5px;background:#bcbcbc'></div>
<div class='a' style='left:498.6px;top:515.5px;width:.6px;height:10.5px;background:#bcbcbc'></div>
<div class='a' style='left:546.6px;top:515.5px;width:.6px;height:10.5px;background:#bcbcbc'></div>
<div class='t' style='left:451.4px;top:517.20px;font-size:5.8px;letter-spacing:-0.032px;color:#2a2a2a'>Writable</div>
<div class='t' style='left:502.3px;top:517.20px;font-size:5.8px;letter-spacing:0.035px;color:#2a2a2a'>Smart Insert</div>
<div class='t' style='left:550.9px;top:517.20px;font-size:5.8px;letter-spacing:0.097px;color:#2a2a2a'>62 : 6</div>
<div class='a' style='left:593.4px;top:516.6px;width:53.6px;height:9.7px;background:#f2f2f2;border:.5px solid #c4c4c4;box-sizing:border-box'></div>
<div class='a' style='left:593.7px;top:516.9px;width:27.2px;height:9.1px;background:#fbf9a8'></div>
<div class='t' style='left:604.3px;top:517.20px;font-size:5.8px;letter-spacing:0.169px;color:#2a2a2a'>63M of 126M</div>
<svg class='a' style='left:650.4px;top:517.3px' width='6' height='8' viewBox='0 0 6 8'><rect x='1' y='1.800' width='4' height='5.600' rx='.5' fill='#b8c8e8' stroke='#5a74b0' stroke-width='.6'/><path d='M.4 1.600h5.200M2.200 .7h1.600' stroke='#5a74b0' stroke-width='.7'/><path d='M2.300 3v3.400M3.700 3v3.400' stroke='#6a84c0' stroke-width='.5'/></svg>
</div></body></html>
